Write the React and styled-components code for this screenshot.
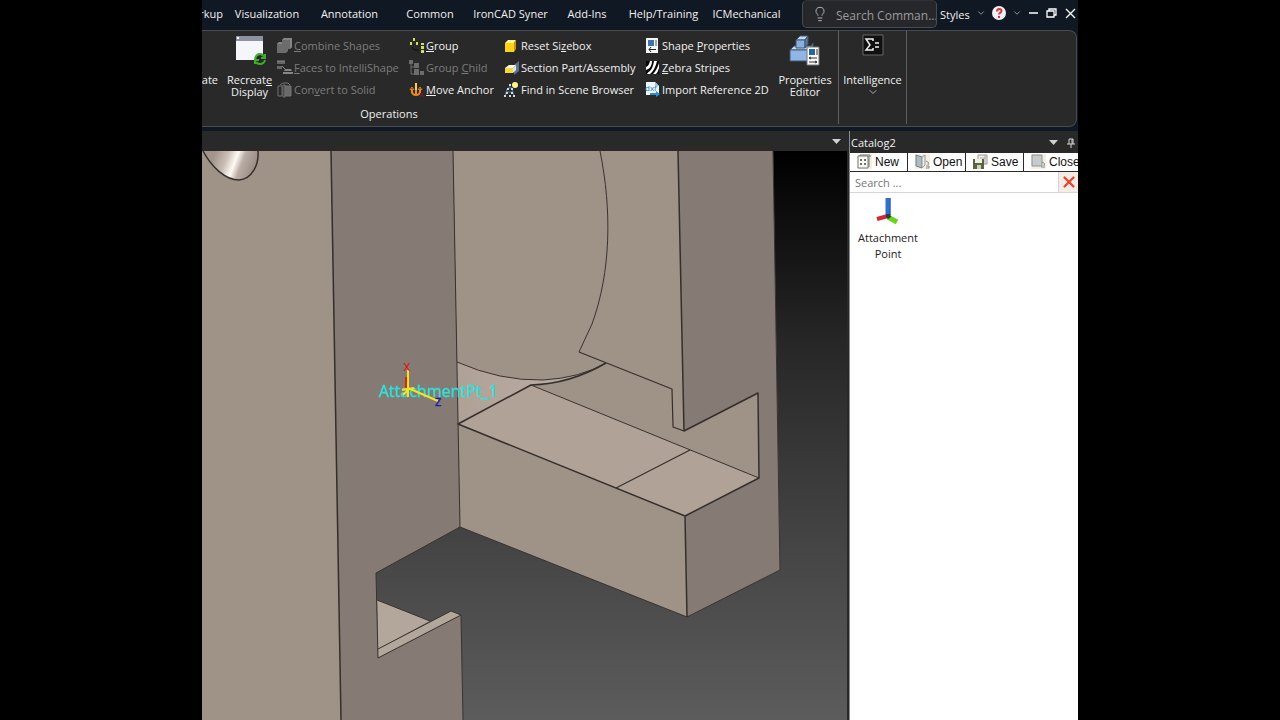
import React from 'react';
import styled, { createGlobalStyle } from 'styled-components';
import { ChevronDown, Lightbulb, X } from 'lucide-react';

const GlobalStyle = createGlobalStyle`
  * {
    box-sizing: border-box;
  }

  body {
    margin: 0;
    background: #000;
    font-family: 'Open Sans', 'Noto Sans', sans-serif;
    font-size: 11px;
    line-height: 16px;
    color: #f0f0f0;
  }

  button,
  input {
    margin: 0;
    padding: 0;
    border: 0;
    background: none;
    font: inherit;
    color: inherit;
  }

  svg {
    display: block;
    flex-shrink: 0;
  }
`;

const Stage = styled.div`
  height: 100vh;
  padding: 0 202px;
  background: #000;
`;

const Window = styled.div`
  height: 100%;
  display: flex;
  flex-direction: column;
  overflow: hidden;
  background: #101823;
`;

/* Title bar */

const TitleBar = styled.header`
  height: 30px;
  display: flex;
  flex-shrink: 0;
`;

const Tabs = styled.nav`
  flex: 1;
  display: flex;
  min-width: 0;
  overflow: hidden;
`;

const Tab = styled.button`
  width: ${(p) => p.$width}px;
  height: 28px;
  flex-shrink: 0;
  text-align: center;
  white-space: nowrap;
`;

const CutTab = styled(Tab)`
  display: flex;
  align-items: center;
  justify-content: flex-end;
  overflow: hidden;
  margin-right: 3px;
`;

const CommandSearch = styled.label`
  width: 135px;
  height: 28px;
  padding-left: 9px;
  display: flex;
  align-items: center;
  gap: 8px;
  border: 1px solid #4b4c4e;
  border-top-color: #303236;
  border-radius: 5px;
  background: #26272a;
  color: #b4b4b4;

  input {
    flex: 1;
    min-width: 0;
    height: 26px;
    padding-top: 2px;
    font-size: 12px;
    outline: none;
  }

  input::placeholder {
    color: #9b9b9b;
    opacity: 1;
  }
`;

const WindowControls = styled.div`
  width: 141px;
  height: 26px;
  display: flex;
  align-items: center;
  justify-content: space-between;
  padding: 0 2px 0 3px;
`;

const StylesButton = styled.button`
  padding-top: 4px;
`;

/* Ribbon */

const Ribbon = styled.section`
  height: 97px;
  margin-right: 1px;
  display: flex;
  flex-shrink: 0;
  border: 1px solid #484b50;
  border-left: 0;
  border-radius: 0 8px 8px 0;
  background: #292929;
`;

const RibbonGroup = styled.div`
  width: ${(p) => p.$width}px;
  height: 93px;
  border-right: 1px solid #5f5f5f;
  display: flex;
  flex-direction: column;
`;

const GroupContent = styled.div`
  height: 75px;
  padding-top: 1px;
  display: flex;
`;

const GroupName = styled.div`
  padding-right: 262px;
  text-align: center;
`;

const BigButton = styled.button`
  width: ${(p) => p.$width}px;
  height: 72px;
  padding-top: 2px;
  display: flex;
  flex-direction: column;
  align-items: center;
  line-height: 12px;
`;

const BigIcon = styled.span`
  height: 40px;
`;

const CutButton = styled.button`
  width: 16px;
  height: 54px;
  margin-right: 4px;
  display: flex;
  justify-content: flex-end;
  align-items: flex-end;
  overflow: hidden;
  line-height: 12px;
`;

const CommandColumn = styled.div`
  width: ${(p) => p.$width}px;
  padding-top: 3px;
  display: flex;
  flex-direction: column;
`;

const Command = styled.button`
  height: 22px;
  display: flex;
  align-items: center;
  gap: 1px;
  white-space: nowrap;

  &:disabled {
    color: #7d7d7d;
  }
`;

/* Body */

const Body = styled.main`
  flex: 1;
  min-height: 0;
  margin-top: 4px;
  display: flex;
  gap: 2px;
  background: #292929;
`;

const Document = styled.section`
  flex: 1;
  min-width: 0;
  display: flex;
  flex-direction: column;
`;

const DocumentBar = styled.div`
  height: 20px;
  padding: 0 6px;
  display: flex;
  align-items: center;
  justify-content: flex-end;
  flex-shrink: 0;
`;

const Scene = styled.svg`
  width: 100%;
  flex: 1;
  min-height: 0;
`;

const Catalog = styled.aside`
  width: 229px;
  display: flex;
  flex-direction: column;
  overflow: hidden;
  border-left: 1px solid #8a8a8a;
  background: #fff;
  color: #222;
`;

const CatalogTitle = styled.div`
  height: 21px;
  padding: 2px 2px 0 1px;
  display: flex;
  align-items: center;
  flex-shrink: 0;
  background: #292929;
  color: #f0f0f0;

  span {
    flex: 1;
  }

  button + button {
    margin-left: 8px;
  }
`;

const CatalogTools = styled.div`
  height: 20px;
  padding: 1px 0;
  display: flex;
  gap: 1px;
  flex-shrink: 0;
  background: #292929;
`;

const ToolButton = styled.button`
  width: 57px;
  height: 18px;
  padding-left: 7px;
  display: flex;
  align-items: center;
  gap: 2px;
  flex-shrink: 0;
  background: #fff;
  color: #111;
  font-family: 'Liberation Sans', sans-serif;
  font-size: 12px;
  line-height: 18px;
`;

const CatalogSearch = styled.div`
  height: 21px;
  display: flex;
  flex-shrink: 0;
  border-bottom: 1px solid #d5d5d5;

  input {
    flex: 1;
    min-width: 0;
    padding: 2px 0 0 5px;
    outline: none;
  }

  input::placeholder {
    color: #757575;
    opacity: 1;
  }

  button {
    width: 20px;
    display: flex;
    align-items: center;
    justify-content: center;
    border-left: 1px solid #d5d5d5;
    background: #f3ece4;
  }
`;

const CatalogItem = styled.button`
  width: 76px;
  padding-top: 4px;
  display: flex;
  flex-direction: column;
  align-items: center;
  gap: 5px;
`;

/* Small ribbon icons, all on a 16px grid */

const icons = {
  combine: (
    <>
      <path d="M5 2l2-2h8v9l-2 2h-2v2l-2 2H0V6l2-2h3z" fill="#6c6c6c" />
      <path d="M5 2l2-2h8l-2 2zM0 6l2-2h3v2zM13 2l2-2v9l-2 2z" fill="#858585" />
    </>
  ),
  faces: (
    <>
      <path d="M0 1h8v3H0zM0 6h5v3H0z" fill="#666" />
      <path d="M8 9h6l1 2H7zM6 12h10v2H6z" fill="#858585" />
      <path d="M0 1h8M5 6l3 3" stroke="#8a8a8a" />
    </>
  ),
  convert: (
    <g fill="none" stroke="#737373">
      <path d="M1 4h4v10H1zM6 3h2v12H6z" />
      <path d="M8 4h6v10H8z" fill="#696969" />
      <path d="M3 3l3-2h5l2 2" />
    </g>
  ),
  group: (
    <>
      <path d="M4 0h2v3H4zM1 4h2v3H1zM7 4h2v3H7zM12 5h3v2h-3zM12 8h3v3h-3zM12 12h3v3h-3z" fill="#d3dc62" />
      <path d="M3 9q2 4 7 3" fill="none" stroke="#0c0c0c" />
    </>
  ),
  child: (
    <>
      <path d="M2 2v12h5M2 7h4" fill="none" stroke="#6d6d6d" />
      <path d="M0 0h4v4H0zM5 3h5v5H5zM5 9h5v6H5zM11 11h4v4h-4z" fill="#6c6c6c" />
    </>
  ),
  anchor: (
    <g fill="none" stroke="#f08a1c" strokeWidth="2">
      <path d="M7 1v12M3 7q-1 6 4 6t4-6" />
      <path d="M1 8l2-3 2 3M9 8l2-3 2 3" strokeWidth="1" />
      <path d="M7 1v7" stroke="#ffd04f" />
      <path d="M11 11l4 4M14 11l-3 4" stroke="#8c1717" strokeWidth="1" />
    </g>
  ),
  sizebox: (
    <>
      <path d="M1 5l3-3h8l-2 3z" fill="#fff3a0" />
      <path d="M1 5h9v9H1z" fill="#fdd217" />
      <path d="M10 5l2-3v9l-2 3z" fill="#c99500" />
    </>
  ),
  section: (
    <>
      <path d="M10 5l5-4v10l-5 4z" fill="#5f7386" />
      <path d="M1 8l4-3h7l-3 3z" fill="#fffbe2" />
      <path d="M1 8h8v5H1z" fill="#f7d63a" />
      <path d="M9 8l3-3v5l-3 3z" fill="#dfe7ee" />
    </>
  ),
  find: (
    <>
      <path d="M6 3v3M4 6h4M3 7L1 14M8 7l2 7M3 10h5" stroke="#56798f" fill="none" />
      <path d="M5 2h2v2H5zM3 6h2v2H3zM7 6h2v2H7zM2 10h2v2H2zM7 10h2v2H7zM0 13h2v2H0zM5 13h2v2H5zM9 13h2v2H9z" fill="#c5dceb" />
      <circle cx="11" cy="3" r="3" fill="#fff68b" />
    </>
  ),
  shape: (
    <>
      <path d="M1 0h12v15H1z" fill="#f5f7f8" />
      <path d="M3 2h6v6H3z" fill="#3a74aa" />
      <path d="M11 2v6" stroke="#555" />
      <path d="M4 11.5h7M6 9l-2 2.5L6 14" stroke="#222" fill="none" />
    </>
  ),
  zebra: (
    <>
      <path d="M1 1h13v13H1z" fill="#080808" />
      <path d="M1 7q3-1 4-6h2q0 7-6 9zM2 14q1-2 3-3 3-3 4-10h3q-2 9-7 13zM8 14q4-4 6-11v5q-1 4-3 6z" fill="#fff" />
    </>
  ),
  dxf: (
    <>
      <path d="M1 0h9l4 4v9H1z" fill="#eef6fb" />
      <path d="M10 0v4h4z" fill="#9dbed3" />
      <text x="0" y="9" fontSize="8" fill="#2479b9">dxf</text>
      <path d="M5 11h6V9l4 3-4 3v-2H5z" fill="#2a8fd8" />
    </>
  ),
};

const columns = [
  {
    width: 132,
    commands: [
      { icon: 'combine', label: '_Combine Shapes', disabled: true },
      { icon: 'faces', label: '_Faces to IntelliShape', disabled: true },
      { icon: 'convert', label: 'Con_vert to Solid', disabled: true },
    ],
  },
  {
    width: 95,
    commands: [
      { icon: 'group', label: '_Group' },
      { icon: 'child', label: 'Group _Child', disabled: true },
      { icon: 'anchor', label: '_Move Anchor' },
    ],
  },
  {
    width: 141,
    commands: [
      { icon: 'sizebox', label: 'Reset Si_zebox' },
      { icon: 'section', label: 'Section Part/Assembly' },
      { icon: 'find', label: 'Find in Scene Browser' },
    ],
  },
  {
    width: 128,
    commands: [
      { icon: 'shape', label: 'Shape _Properties' },
      { icon: 'zebra', label: '_Zebra Stripes' },
      { icon: 'dxf', label: 'Import Reference 2D' },
    ],
  },
];

const tabs = [
  { name: 'Visualization', width: 82 },
  { name: 'Annotation', width: 83 },
  { name: 'Common', width: 78 },
  { name: 'IronCAD Syner', width: 83 },
  { name: 'Add-Ins', width: 70 },
  { name: 'Help/Training', width: 83 },
  { name: 'ICMechanical', width: 83 },
];

// The letter after the underscore is the access key
const KeyLabel = ({ text }) => {
  const at = text.indexOf('_');
  if (at < 0) return <span>{text}</span>;
  return (
    <span>
      {text.slice(0, at)}
      <u>{text[at + 1]}</u>
      {text.slice(at + 2)}
    </span>
  );
};

const DisplayIcon = () => (
  <svg width="32" height="32" viewBox="0 0 32 32">
    <path d="M2 2h27v24H2z" fill="#f4f6f9" />
    <path d="M2 2h27v5H2z" fill="#8b93a3" />
    <path d="M3 3h2v2H3z" fill="#fff" />
    <circle cx="26" cy="25" r="4" fill="#292929" />
    <path d="M21 25q1-5 5-5 3 0 4 3M31 20v4h-4M31 26q-1 4-5 4-3 0-4-2M21 30v-4h4" fill="none" stroke="#3fae2a" strokeWidth="2" />
  </svg>
);

const PropertiesIcon = () => (
  <svg width="32" height="32" viewBox="0 0 32 32">
    <g stroke="#46566b">
      <path d="M1 16l4-4h18l-4 4zM7 6l4-4h8l-3 4z" fill="#c2daf4" />
      <path d="M19 16l5-7v10l-5 8z" fill="#5b81b0" />
      <path d="M1 16h18v11H1z" fill="#8fb6e6" />
      <path d="M7 6h9v8H7z" fill="#86b0e2" />
      <path d="M16 6l3-4v8l-3 4z" fill="#4f78ac" />
    </g>
    <path d="M18 13h12v18H18z" fill="#fafafa" stroke="#777" />
    <path d="M20 15h6v6h-6z" fill="#27659c" />
    <path d="M28 15v6M20 24h8M22 23l-2 1 2 1M20 28h8M26 27l2 1-2 1" stroke="#333" fill="none" />
  </svg>
);

const SigmaIcon = () => (
  <svg width="22" height="22" viewBox="0 0 22 22">
    <path d="M1 1h20v20H1z" fill="#101010" stroke="#666" />
    <path d="M11 7V5H4l4 6-4 5h7v-2M13 9h4M13 13h4" fill="none" stroke="#eee" strokeWidth="1.5" />
  </svg>
);

const HelpIcon = () => (
  <svg width="14" height="14" viewBox="0 0 14 14">
    <circle cx="7" cy="7" r="7" fill="#f1f2f8" />
    <path d="M5 5.5q0-2.500 2.200-2.500 2.300 0 2.300 2 0 1.200-1.300 1.900-1.100.6-1.100 1.600M7 10v2" fill="none" stroke="#e2303c" strokeWidth="2" />
  </svg>
);

const MinimizeIcon = () => (
  <svg width="12" height="12" viewBox="0 0 12 12">
    <path d="M1 6h9" stroke="#fff" strokeWidth="1.5" />
  </svg>
);

const RestoreIcon = () => (
  <svg width="12" height="12" viewBox="0 0 12 12">
    <path d="M1 4h7v6H1zM3 4V2h7v6H8" fill="none" stroke="#fff" strokeWidth="1.3" />
  </svg>
);

const CloseIcon = () => (
  <svg width="12" height="12" viewBox="0 0 12 12">
    <path d="M2 2l9 9M11 2l-9 9" stroke="#fff" strokeWidth="1.3" />
  </svg>
);

const PinIcon = () => (
  <svg width="10" height="10" viewBox="0 0 10 10">
    <path d="M3 6V1h4v5M6 1v5M1 6h8M5 6v4" fill="none" stroke="#d6d6d6" />
  </svg>
);

const TriangleIcon = () => (
  <svg width="9" height="5" viewBox="0 0 9 5">
    <path d="M0 0h9L4.500 5z" fill="#d0d0d0" />
  </svg>
);

const toolIcons = {
  New: (
    <>
      <path d="M0 0h15v15H0z" fill="#f3efe6" />
      <path d="M1 2h10v12H1z" fill="#fafaf5" stroke="#777" />
      <path d="M3 2V1h10v2M12 2v11" fill="none" stroke="#777" />
      <path d="M3 5h2v2H3zM7 5h2v2H7zM3 9h2v2H3zM7 9h2v2H7z" fill="#6f756f" />
    </>
  ),
  Open: (
    <>
      <path d="M0 0h15v15H0z" fill="#f3efe6" />
      <path d="M1 1l6 2v11l-6-2z" fill="#aebbc1" stroke="#777f83" />
      <path d="M7 3l3-2v10l-3 3z" fill="#e9eeee" stroke="#999" />
      <path d="M11 7q4 1 2 4M11 12h3v2h-3" fill="none" stroke="#888" />
    </>
  ),
  Save: (
    <>
      <path d="M5 1h9v9H5z" fill="#f3efe6" stroke="#999" />
      <path d="M7 4h6M12 1v9" stroke="#aaa" />
      <path d="M0 5h11v10H0z" fill="#5b6340" />
      <path d="M2 5h7v4H2z" fill="#edf0e6" />
      <path d="M4 11h4v4H4z" fill="#cdd3c1" />
    </>
  ),
  Close: (
    <>
      <path d="M0 0h15v15H0z" fill="#f3efe6" />
      <path d="M1 1h10v11H1z" fill="#c7cbcd" stroke="#8f9496" />
      <path d="M11 8q4 1 2 4M10 13h4" fill="none" stroke="#888" />
    </>
  ),
};

const AttachmentIcon = () => (
  <svg width="24" height="28" viewBox="0 0 24 28">
    <path d="M12 18V1" stroke="#2d72cf" strokeWidth="5" />
    <path d="M14 18V1" stroke="#2359ac" />
    <path d="M12 19L1 22" stroke="#d22630" strokeWidth="4" />
    <path d="M12 20l9 5" stroke="#68d51d" strokeWidth="5" />
    <path d="M10 17l4 0 1 3-3 2-2-2z" fill="#333c3a" />
  </svg>
);

const ModelScene = () => (
  <Scene viewBox="202 151 645 569" preserveAspectRatio="xMinYMin slice" role="img" aria-label="Model">
    <defs>
      <linearGradient id="sky" x1="0" y1="0" x2="0" y2="1">
        <stop offset="0" stopColor="#000" />
        <stop offset="0.33" stopColor="#262626" />
        <stop offset="0.66" stopColor="#424242" />
        <stop offset="1" stopColor="#5c5c5c" />
      </linearGradient>
      <linearGradient id="cone" gradientUnits="userSpaceOnUse" x1="214" y1="156" x2="256" y2="172">
        <stop offset="0" stopColor="#a3958b" />
        <stop offset="0.28" stopColor="#cabfb7" />
        <stop offset="0.48" stopColor="#fffaf4" />
        <stop offset="0.64" stopColor="#b9aca4" />
        <stop offset="1" stopColor="#94867e" />
      </linearGradient>
      <linearGradient id="ledge" x1="0" y1="0" x2="1" y2="0">
        <stop offset="0" stopColor="#b0a197" />
        <stop offset="0.6" stopColor="#b8aaa0" />
        <stop offset="1" stopColor="#a6988e" />
      </linearGradient>
    </defs>

    <path d="M202 151h645v569H202z" fill="url(#sky)" />

    {/* far block */}
    <path d="M453 151H773L780 570 687 617 460 527z" fill="#9f9287" />
    <path d="M678 151H773L780 570 687 617 685 516 759 478 758 393 684 431z" fill="#857a74" />
    <path d="M457 362Q500 381 543 380 580 378 606 363 575 384 531 385L458 424z" fill="url(#ledge)" />
    <path d="M531 385L759 478 685 516 458 424z" fill="#b0a297" />

    {/* near block */}
    <path d="M202 151H331L341 720H202z" fill="#9f9287" />
    <path d="M331 151H453L460 527 376 573 378 658 461 615 463 720H341z" fill="#857a74" />
    <path d="M377 600L430 621 378 649z" fill="#b3a69b" />
    <path d="M378 649L451 611 461 615 378 658z" fill="#b3a69b" />
    <path d="M203 151C212 168 226 180 239 180 252 179 259 165 258 151z" fill="url(#cone)" />

    <g fill="none" stroke="#393330" strokeWidth="1" strokeLinejoin="round">
      <path d="M457 362Q500 381 543 380 580 378 606 363" />
      <path d="M531 385L759 478M773 151L780 570 687 617 460 527" />
      <path d="M600 151C612 210 611 272 592 324L579 352" />
      <path d="M453 151L460 527 376 573 378 658 461 615 463 720" />
      <path d="M377 600L430 621M378 649L451 611 461 615" />
    </g>
    <g fill="none" stroke="#352f2c" strokeWidth="1.5" strokeLinejoin="round">
      <path d="M331 151L341 720" />
      <path d="M203 151C212 168 226 180 239 180 252 179 259 165 258 151" />
      <path d="M606 363Q570 384 531 385L458 424 685 516 759 478 758 393 684 431 678 151M685 516L687 617" />
      <path d="M579 352L672 389 673 427 684 431M616 488L690 450" strokeWidth="1.2" />
    </g>

    {/* attachment point */}
    <path d="M406 377v13" stroke="#dd2018" strokeWidth="2" />
    <text x="379" y="397" fontSize="16" fill="#25e3df" stroke="#25e3df" strokeWidth="0.3">AttachmentPt_1</text>
    <path d="M408 370V397M408 388L438 401M402 390l12-2M409 389l-6 6" fill="none" stroke="#f2e51a" strokeWidth="2" />
    <text x="407" y="371" fontSize="14" textAnchor="middle" fill="#e01515">x</text>
    <text x="438" y="406" fontSize="14" textAnchor="middle" fill="#1818b8" stroke="#1818b8" strokeWidth="0.3">z</text>
  </Scene>
);

const App = () => {
  return (
    <Stage>
      <GlobalStyle />
      <Window>
        <TitleBar>
          <Tabs>
            <CutTab $width={21}>Markup</CutTab>
            {tabs.map((tab) => (
              <Tab key={tab.name} $width={tab.width}>{tab.name}</Tab>
            ))}
          </Tabs>
          <CommandSearch>
            <Lightbulb size={16} strokeWidth={1.5} />
            <input aria-label="Search commands" placeholder="Search Comman..." />
          </CommandSearch>
          <WindowControls>
            <StylesButton>Styles</StylesButton>
            <ChevronDown size={10} color="#aaa" />
            <button aria-label="Help"><HelpIcon /></button>
            <ChevronDown size={10} color="#aaa" />
            <button aria-label="Minimize"><MinimizeIcon /></button>
            <button aria-label="Restore"><RestoreIcon /></button>
            <button aria-label="Close window"><CloseIcon /></button>
          </WindowControls>
        </TitleBar>

        <Ribbon>
          <RibbonGroup $width={637}>
            <GroupContent>
              <CutButton>Create</CutButton>
              <BigButton $width={55}>
                <BigIcon><DisplayIcon /></BigIcon>
                <KeyLabel text="Recreat_e Display" />
              </BigButton>
              {columns.map((column) => (
                <CommandColumn key={column.commands[0].icon} $width={column.width}>
                  {column.commands.map((command) => (
                    <Command key={command.icon} disabled={command.disabled}>
                      <svg width="16" height="16" viewBox="0 0 16 16">{icons[command.icon]}</svg>
                      <KeyLabel text={command.label} />
                    </Command>
                  ))}
                </CommandColumn>
              ))}
              <BigButton $width={64}>
                <BigIcon><PropertiesIcon /></BigIcon>
                <span>Properties Editor</span>
              </BigButton>
            </GroupContent>
            <GroupName>Operations</GroupName>
          </RibbonGroup>
          <RibbonGroup $width={68}>
            <GroupContent>
              <BigButton $width={68}>
                <BigIcon><SigmaIcon /></BigIcon>
                <span>Intelligence</span>
                <ChevronDown size={12} color="#aaa" />
              </BigButton>
            </GroupContent>
          </RibbonGroup>
        </Ribbon>

        <Body>
          <Document>
            <DocumentBar>
              <button aria-label="Document list"><TriangleIcon /></button>
            </DocumentBar>
            <ModelScene />
          </Document>
          <Catalog>
            <CatalogTitle>
              <span>Catalog2</span>
              <button aria-label="Catalog menu"><TriangleIcon /></button>
              <button aria-label="Pin catalog"><PinIcon /></button>
            </CatalogTitle>
            <CatalogTools>
              {Object.keys(toolIcons).map((name) => (
                <ToolButton key={name}>
                  <svg width="16" height="16" viewBox="0 0 16 16">{toolIcons[name]}</svg>
                  {name}
                </ToolButton>
              ))}
            </CatalogTools>
            <CatalogSearch>
              <input aria-label="Search catalog" placeholder="Search ..." />
              <button aria-label="Clear search"><X size={18} color="#e8452f" strokeWidth={3} /></button>
            </CatalogSearch>
            <CatalogItem>
              <AttachmentIcon />
              <span>Attachment Point</span>
            </CatalogItem>
          </Catalog>
        </Body>
      </Window>
    </Stage>
  );
};

export default App;
